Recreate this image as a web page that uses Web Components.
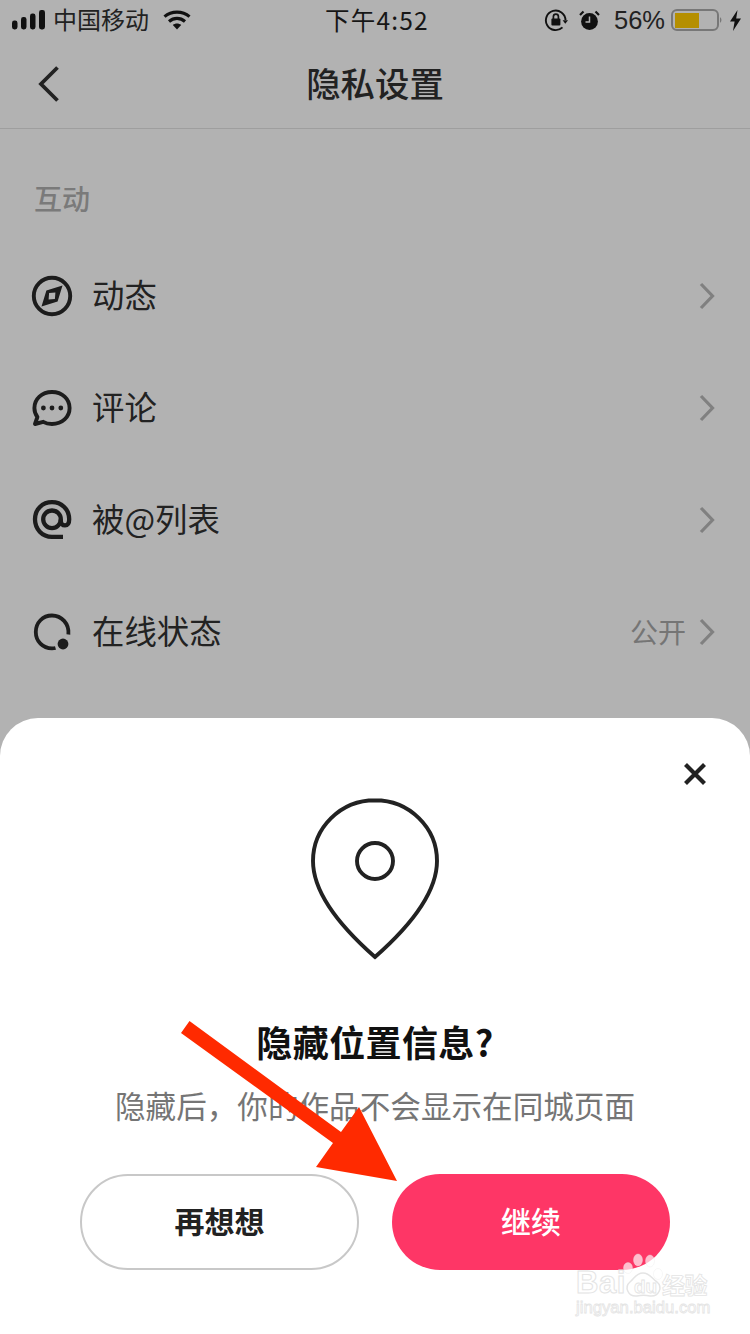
<!DOCTYPE html>
<html><head><meta charset="utf-8">
<style>
html,body{margin:0;padding:0;width:750px;height:1334px;overflow:hidden;background:#b2b2b2}
body{font-family:"Noto Sans CJK SC","Noto Sans",sans-serif;position:relative}
app-page{display:flex}
</style></head>
<body>
<app-page>
  <status-bar slot="top"></status-bar>
  <nav-bar slot="top" title="隐私设置"></nav-bar>
  <section-label slot="top">互动</section-label>
  <setting-row slot="top" label="动态">
    <svg slot="icon" width="44" height="44" viewBox="0 0 44 44"><circle cx="22" cy="22" r="18.2" fill="none" stroke="#1c1c1c" stroke-width="3.9"/><path fill-rule="evenodd" d="M32.5 11.5 L27.6 27.6 L11.5 32.5 L16.4 16.4 Z M25.4 18.6 L19.1 19.1 L18.6 25.4 L24.9 24.9 Z" fill="#1c1c1c"/></svg>
  </setting-row>
  <setting-row slot="top" label="评论">
    <svg slot="icon" width="44" height="44" viewBox="0 0 44 44"><path d="M22 6 C32.2 6 39.6 13 39.6 22 C39.6 31 32.2 38 22 38 C18.5 38 15.5 37.2 13.2 35.8 L5 38 L7.4 31 C5.4 28.4 4.4 25.4 4.4 22 C4.4 13 11.8 6 22 6 Z" fill="none" stroke="#1c1c1c" stroke-width="3.9" stroke-linejoin="round"/><circle cx="13.4" cy="22" r="2.4" fill="#1c1c1c"/><circle cx="22" cy="22" r="2.4" fill="#1c1c1c"/><circle cx="30.8" cy="22" r="2.4" fill="#1c1c1c"/></svg>
  </setting-row>
  <setting-row slot="top" label="被@列表">
    <svg slot="icon" width="44" height="44" viewBox="0 0 44 44"><path d="M33 38.8 L22 38.8 C12 38.8 5 31 5 21.3 C5 11.4 12.4 4.2 22 4.2 C31.6 4.2 39.2 11.4 39.2 21.3 C39.2 25.2 37.6 27.4 35 27.4 C32.4 27.4 30.8 25.6 30.8 23 L30.8 21.3" fill="none" stroke="#1c1c1c" stroke-width="4.3"/><circle cx="22" cy="21.3" r="8.8" fill="none" stroke="#1c1c1c" stroke-width="4.3"/></svg>
  </setting-row>
  <setting-row slot="top" label="在线状态" value="公开">
    <svg slot="icon" width="44" height="44" viewBox="0 0 44 44"><path d="M38.4 24.5 C39.4 13.5 31.5 5.5 22 5.5 C12.7 5.5 5.8 12.7 5.8 22 C5.8 31.3 12.7 38.4 22 38.4 C23.6 38.4 24.4 38.3 25.5 38" fill="none" stroke="#1c1c1c" stroke-width="3.8"/><circle cx="33" cy="34" r="5.4" fill="#1c1c1c"/></svg>
  </setting-row>
  <bottom-sheet slot="bottom" heading="隐藏位置信息?" text="隐藏后，你的作品不会显示在同城页面">
    <pill-button wide>再想想</pill-button>
    <pill-button primary>继续</pill-button>
  </bottom-sheet>
</app-page>
<red-arrow></red-arrow>
<baidu-mark></baidu-mark>
<script>
const CJK='"Noto Sans CJK SC","Noto Sans",sans-serif';
function def(name,html){
  customElements.define(name,class extends HTMLElement{
    connectedCallback(){
      if(this.shadowRoot)return;
      const r=this.attachShadow({mode:'open'});
      r.innerHTML=typeof html==='function'?html(this):html;
    }
  });
}
def('app-page',`<style>:host{display:flex;flex-direction:column;width:750px;height:1334px}
.top{flex:1;min-height:0;display:flex;flex-direction:column;overflow:hidden}
</style><div class="top"><slot name="top"></slot></div><slot name="bottom"></slot>`);

def('status-bar',`<style>
:host{display:flex;align-items:center;height:40px;font-family:${CJK};color:#111;flex:none}
.l{display:flex;align-items:center;padding-left:12px;flex:1;min-width:0}
.l span{font-size:24px;line-height:38px;margin:0 0 2px 8px;color:#222}
.l svg.w{margin-left:14px}
.c{font-size:24.5px;line-height:40px;font-family:"Noto Sans CJK SC",sans-serif;letter-spacing:1.2px;white-space:nowrap;color:#161616;flex:none;width:108px;text-align:center}
.r{display:flex;align-items:center;flex:1;min-width:0;justify-content:flex-end;padding-right:8px}
.pct{font-family:"Liberation Sans",sans-serif;font-size:25.5px;line-height:40px;color:#222;margin:0 6px 0 14px}
</style>
<div class="l">
<svg width="33" height="20" viewBox="0 0 33 20"><rect x="0" y="10.5" width="5.5" height="9" rx="2.4" fill="#111"/><rect x="9" y="7" width="5.5" height="12.5" rx="2.4" fill="#111"/><rect x="18" y="3.5" width="5.5" height="16" rx="2.4" fill="#111"/><rect x="27" y="0" width="6" height="19.5" rx="2.4" fill="#111"/></svg>
<span>中国移动</span>
<svg class="w" width="28" height="20" viewBox="0 0 28 20"><path d="M1.5 6.6 C8.5 .6 19.5 .6 26.5 6.6" fill="none" stroke="#111" stroke-width="3.2"/><path d="M6 11.4 C10.8 7.4 17.2 7.4 22 11.4" fill="none" stroke="#111" stroke-width="3.2"/><path d="M9.8 15 C12.3 13 15.7 13 18.2 15 L14 19.6 Z" fill="#111"/></svg>
</div>
<div class="c">下午4:52</div>
<div class="r">
<svg width="24" height="24" viewBox="0 0 24 24"><path d="M21.5 12 A9.8 9.8 0 1 0 18.5 19.4" fill="none" stroke="#111" stroke-width="1.9"/><path d="M18.6 12.2 L24 12.2 L21.3 15.8 Z" fill="#111"/><rect x="7.4" y="10.6" width="9" height="7" rx="1" fill="#111"/><path d="M9.4 11 V8.6 A2.5 2.5 0 0 1 14.4 8.6 V11" fill="none" stroke="#111" stroke-width="1.7"/></svg>
<svg style="margin-left:11px" width="21" height="21" viewBox="0 0 21 21"><circle cx="10.5" cy="11.5" r="8.4" fill="#111"/><path d="M10.5 6.5 V12 H6.5" fill="none" stroke="#b2b2b2" stroke-width="1.5"/><path d="M1 5 L4.5 1.5 M20 5 L16.5 1.5" stroke="#111" stroke-width="2.2"/></svg>
<div class="pct">56%</div>
<svg width="52" height="22" viewBox="0 0 52 22"><rect x="1" y="1" width="46" height="20" rx="5" fill="none" stroke="#777" stroke-width="2"/><rect x="4" y="4" width="24" height="15" fill="#b58f00"/><path d="M49 8 Q52 11 49 14 Z" fill="#777"/></svg>
<svg style="margin-left:6px" width="13" height="21" viewBox="0 0 13 21"><path d="M8.5 0 L1 11.6 H5.6 L4 21 L12 8.6 H7.2 Z" fill="#111"/></svg>
</div>`);

def('nav-bar',el=>`<style>
:host{display:flex;align-items:center;justify-content:center;height:88px;border-bottom:1px solid #9e9e9e;position:relative;flex:none}
.b{position:absolute;left:37px;top:25px;display:block}
h1{margin:0 0 4px;font:500 34.4px/84px ${CJK};color:#222}
</style>
<svg class="b" width="26" height="38" viewBox="0 0 26 38"><path d="M20.5 2.5 L4 19 L20.5 35.5" fill="none" stroke="#222" stroke-width="3.8"/></svg>
<h1>${el.getAttribute('title')}</h1>`);

def('section-label',`<style>
:host{display:block;padding:48px 0 0 34px;height:63px;font:500 28px/42px ${CJK};color:#7a7a7a;flex:none}
</style><slot></slot>`);

def('setting-row',el=>{const v=el.getAttribute('value');return `<style>
:host{display:flex;align-items:center;height:112px;padding:0 35px 0 30px;flex:none}
.i{width:44px;height:44px;display:flex}
.t{margin:0 0 5px 18px;flex:1;font:400 32.4px/44px ${CJK};color:#222}
.v{font:400 28px/44px ${CJK};color:#757575;margin:0 13px 3px 0}
svg{display:block}
</style>
<div class="i"><slot name="icon"></slot></div>
<div class="t">${el.getAttribute('label')}</div>
${v?`<div class="v">${v}</div>`:''}
<svg width="16" height="28" viewBox="0 0 16 28"><path d="M2 2 L13.5 14 L2 26" fill="none" stroke="#808080" stroke-width="3.2"/></svg>`});

def('bottom-sheet',el=>`<style>
:host{display:flex;flex-direction:column;align-items:center;flex:none;height:616px;background:#fff;border-radius:38px 38px 0 0;box-sizing:border-box;padding-top:45px}
.x{align-self:flex-end;margin-right:44px;display:block;flex:none}
.pin{display:block;margin-top:13px;flex:none}
h2{margin:54px 0 0;font:700 36px/54px ${CJK};color:#111;letter-spacing:.4px}
p{margin:14px 0 0;font:400 30.6px/46px ${CJK};color:#757575;white-space:nowrap}
.btns{display:flex;gap:33px;margin-top:46px}
</style>
<svg class="x" width="22" height="22" viewBox="0 0 22 22"><path d="M1.5 1.5 L20.5 20.5 M20.5 1.5 L1.5 20.5" stroke="#222" stroke-width="4.2"/></svg>
<svg class="pin" width="128" height="162" viewBox="0 0 128 162"><path d="M64 2.2 C29.6 2.2 2 29.6 2 63 C2 96 31 130 64 159 C97 130 126 96 126 63 C126 29.6 98.4 2.2 64 2.2 Z" fill="none" stroke="#222" stroke-width="3.9" stroke-linejoin="miter"/><circle cx="64" cy="63" r="18" fill="none" stroke="#222" stroke-width="3.9"/></svg>
<h2>${el.getAttribute('heading')}</h2>
<p>${el.getAttribute('text')}</p>
<div class="btns"><slot></slot></div>`);

def('pill-button',el=>`<style>
:host{display:flex;align-items:center;justify-content:center;box-sizing:border-box;width:${el.hasAttribute('wide')?279:278}px;height:96px;border-radius:48px;padding-bottom:4px;
${el.hasAttribute('primary')?'background:#fe3666;color:#fff;font:500 30px/1 '+CJK:'border:2px solid #c8c8c8;background:#fff;color:#222;font:700 30px/1 '+CJK}}
</style><slot></slot>`);

def('red-arrow',`<style>:host{display:block;position:absolute;left:0;top:0;width:750px;height:1334px;pointer-events:none}svg{display:block}</style>
<svg width="750" height="1334" viewBox="0 0 750 1334"><polygon points="189.5,1021 341,1132 359,1107 397,1181 316,1167 333,1143 181,1033" fill="#ff2a00"/></svg>`);

def('baidu-mark',`<style>
:host{display:block;position:absolute;left:574px;top:1250px;width:140px;height:70px;pointer-events:none;color:#fff}
div{position:absolute;white-space:nowrap;-webkit-text-stroke:.8px #e4e4e4}
.a{left:2px;top:20px;font:700 31px/26px "Liberation Sans",sans-serif;letter-spacing:.5px;-webkit-text-stroke:1px #e4e4e4}
.d{left:60px;top:28px;font:700 19px/18px "Liberation Sans",sans-serif}
.j{left:2px;top:49px;font:400 16.7px/17px "Liberation Sans",sans-serif}
.k{left:88px;top:21px;font:700 23px/26px ${CJK};letter-spacing:-.5px}
svg{position:absolute;left:0;top:0}
</style>
<svg width="140" height="50" viewBox="0 0 140 50"><g fill="#fff" fill-opacity=".68" stroke="#e8e8e8" stroke-opacity=".35"><ellipse cx="54" cy="18" rx="4.5" ry="5.5"/><ellipse cx="64" cy="10" rx="4.5" ry="6"/><ellipse cx="76" cy="11" rx="4.5" ry="6"/><ellipse cx="84" cy="24" rx="4.5" ry="5.5"/></g><path d="M69 23 C62 23 60 29 56 32 C50 37 54 47 63 46 C67 45 72 45 76 46 C85 47 89 37 83 32 C78 29 76 23 69 23 Z" fill="#fff" stroke="#e4e4e4" stroke-width="1.5"/></svg>
<div class="a">Bai</div><div class="d">du</div><div class="k">经验</div><div class="j">jingyan.baidu.com</div>`);
</script>
</body></html>
